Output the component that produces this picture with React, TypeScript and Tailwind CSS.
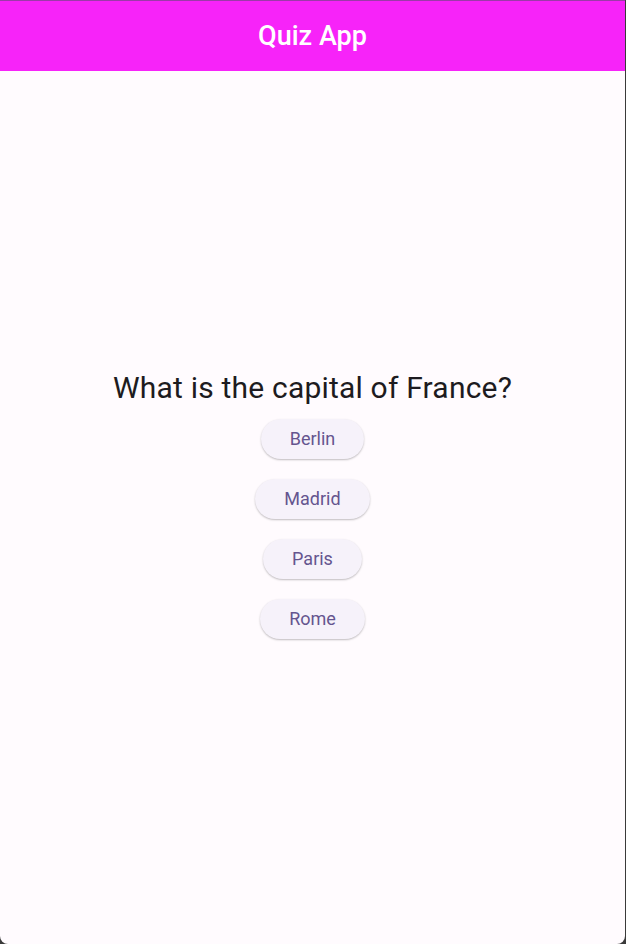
import React from "react";

export default function App() {
  const options = ["Berlin", "Madrid", "Paris", "Rome"];
  return (
    <div className="w-[626px] h-[944px] bg-[#3a3a3a] overflow-hidden" style={{ fontFamily: "Roboto, 'Liberation Sans', sans-serif" }}>
      <div className="w-[625px] h-[944px] flex flex-col bg-[#fffbfe] rounded-b-[8px] overflow-hidden border-t border-[#9b3aa8]">
        <div className="h-[70px] bg-[#f723f9] flex items-center justify-center shrink-0">
          <span className="text-white text-[27px] font-medium">Quiz App</span>
        </div>
        <div className="flex-1 flex flex-col items-center justify-center pb-[4px]">
          <div className="text-[30px] tracking-[0.2px] text-[#1d1b20] leading-[36px] mb-[3px] mt-[7px]">What is the capital of France?</div>
          {options.map((o) => (
            <button
              key={o}
              className="h-[40px] px-[29px] my-[10px] rounded-full bg-[#f6f2fa] text-[#65558f] text-[18px] shadow-[0_1px_2px_rgba(0,0,0,0.25)]"
            >
              {o}
            </button>
          ))}
        </div>
      </div>
    </div>
  );
}
